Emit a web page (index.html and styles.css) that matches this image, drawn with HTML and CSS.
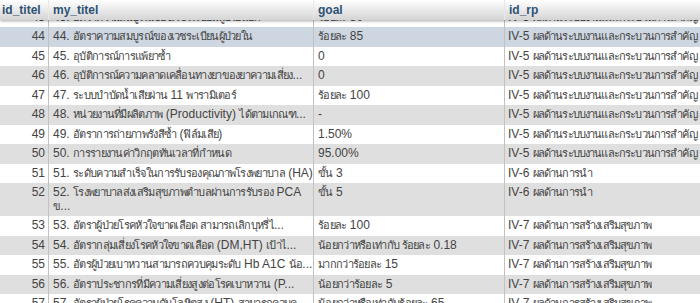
FILE: index.html
```html
<!DOCTYPE html>
<html>
<head>
<meta charset="utf-8">
<link rel="stylesheet" href="styles.css">
</head>
<body>
<div class="grid">
  <table class="tbl head">
    <colgroup><col class="c1"><col class="c2"><col class="c3"><col class="c4"></colgroup>
    <thead>
      <tr><th class="first">id_titel</th><th>my_titel</th><th>goal</th><th>id_rp</th></tr>
    </thead>
  </table>
  <table class="tbl data">
    <colgroup><col class="c1"><col class="c2"><col class="c3"><col class="c4"></colgroup>
    <tbody>
      <tr class="odd"><td class="num">43</td><td>43. <span class="th">อัตราความสมบูรณ์ของเวชระเบียนผู้ป่วยนอก</span></td><td><span class="th">ร้อยละ</span> 80</td><td class="rp">IV-5 <span class="th">ผลด้านระบบงานและกระบวนการสำคัญ</span></td></tr>
      <tr class="marked"><td class="num">44</td><td>44. <span class="th">อัตราความสมบูรณ์ของเวชระเบียนผู้ป่วยใน</span></td><td><span class="th">ร้อยละ</span> 85</td><td class="rp">IV-5 <span class="th">ผลด้านระบบงานและกระบวนการสำคัญ</span></td></tr>
      <tr class="odd"><td class="num">45</td><td>45. <span class="th">อุบัติการณ์การแพ้ยาซ้ำ</span></td><td>0</td><td class="rp">IV-5 <span class="th">ผลด้านระบบงานและกระบวนการสำคัญ</span></td></tr>
      <tr class="even"><td class="num">46</td><td>46. <span class="th">อุบัติการณ์ความคลาดเคลื่อนทางยาของยาความเสี่ยง</span>...</td><td>0</td><td class="rp">IV-5 <span class="th">ผลด้านระบบงานและกระบวนการสำคัญ</span></td></tr>
      <tr class="odd"><td class="num">47</td><td>47. <span class="th">ระบบบำบัดน้ำเสียผ่าน</span> 11 <span class="th">พารามิเตอร์</span></td><td><span class="th">ร้อยละ</span> 100</td><td class="rp">IV-5 <span class="th">ผลด้านระบบงานและกระบวนการสำคัญ</span></td></tr>
      <tr class="even"><td class="num">48</td><td>48. <span class="th">หน่วยงานที่มีผลิตภาพ</span> (Productivity) <span class="th">ได้ตามเกณฑ</span>...</td><td>-</td><td class="rp">IV-5 <span class="th">ผลด้านระบบงานและกระบวนการสำคัญ</span></td></tr>
      <tr class="odd"><td class="num">49</td><td>49. <span class="th">อัตราการถ่ายภาพรังสีซ้ำ</span> (<span class="th">ฟิล์มเสีย</span>)</td><td>1.50%</td><td class="rp">IV-5 <span class="th">ผลด้านระบบงานและกระบวนการสำคัญ</span></td></tr>
      <tr class="even"><td class="num">50</td><td>50. <span class="th">การรายงานค่าวิกฤตทันเวลาที่กำหนด</span></td><td>95.00%</td><td class="rp">IV-5 <span class="th">ผลด้านระบบงานและกระบวนการสำคัญ</span></td></tr>
      <tr class="odd"><td class="num">51</td><td>51. <span class="th">ระดับความสำเร็จในการรับรองคุณภาพโรงพยาบาล</span> (HA)</td><td><span class="th">ขั้น</span> 3</td><td class="rp">IV-6 <span class="th">ผลด้านการนำ</span></td></tr>
      <tr class="even"><td class="num">52</td><td>52. <span class="th">โรงพยาบาลส่งเสริมสุขภาพตำบลผ่านการรับรอง</span> PCA<br><span class="th">ข</span>...</td><td><span class="th">ขั้น</span> 5</td><td class="rp">IV-6 <span class="th">ผลด้านการนำ</span></td></tr>
      <tr class="odd"><td class="num">53</td><td>53. <span class="th">อัตราผู้ป่วยโรคหัวใจขาดเลือด สามารถเลิกบุหรี่ไ</span>...</td><td><span class="th">ร้อยละ</span> 100</td><td class="rp">IV-7 <span class="th">ผลด้านการสร้างเสริมสุขภาพ</span></td></tr>
      <tr class="even"><td class="num">54</td><td>54. <span class="th">อัตรากลุ่มเสี่ยงโรคหัวใจขาดเลือด</span> (DM,HT) <span class="th">เป้าไ</span>...</td><td><span class="th">น้อยกว่าหรือเท่ากับ ร้อยละ</span> 0.18</td><td class="rp">IV-7 <span class="th">ผลด้านการสร้างเสริมสุขภาพ</span></td></tr>
      <tr class="odd"><td class="num">55</td><td>55. <span class="th">อัตรผู้ป่วยเบาหวานสามารถควบคุมระดับ</span> Hb A1C <span class="th">น้อ</span>...</td><td><span class="th">มากกว่าร้อยละ</span> 15</td><td class="rp">IV-7 <span class="th">ผลด้านการสร้างเสริมสุขภาพ</span></td></tr>
      <tr class="even"><td class="num">56</td><td>56. <span class="th">อัตราประชากรที่มีความเสี่ยงสูงต่อโรคเบาหวาน</span> (P...</td><td><span class="th">น้อยกว่าร้อยละ</span> 5</td><td class="rp">IV-7 <span class="th">ผลด้านการสร้างเสริมสุขภาพ</span></td></tr>
      <tr class="odd"><td class="num">57</td><td>57. <span class="th">อัตราผู้ป่วยโรคความดันโลหิตสูง</span> (HT) <span class="th">สามารถควบค</span>...</td><td><span class="th">น้อยกว่าหรือเท่ากับร้อยละ</span> 65</td><td class="rp">IV-7 <span class="th">ผลด้านการสร้างเสริมสุขภาพ</span></td></tr>
    </tbody>
  </table>
</div>
</body>
</html>
```

FILE: styles.css
```css
html, body {
  margin: 0;
  padding: 0;
  background: #ffffff;
}
.grid {
  position: relative;
  width: 700px;
  height: 303px;
  overflow: hidden;
  font-family: "Liberation Sans", Arial, sans-serif;
  font-size: 12px;
  color: #444;
}
.tbl {
  width: 700px;
  table-layout: fixed;
  border-collapse: separate;
  border-spacing: 0;
}
.c1 { width: 48px; }
.c2 { width: 265px; }
.c3 { width: 191px; }
.c4 { width: 196px; }

.head {
  position: absolute;
  left: 0;
  top: 0;
  z-index: 2;
  box-shadow: 0 1px 3px rgba(0, 0, 0, 0.35);
}
.head th {
  height: 20px;
  box-sizing: border-box;
  padding: 0 4px;
  text-align: left;
  font-weight: bold;
  font-size: 12px;
  color: #2d5275;
  background: linear-gradient(#ffffff, #d4d4d4);
  border-left: 1px solid #e8e8e8;
  white-space: nowrap;
  overflow: hidden;
}
.head th.first {
  border-left: none;
  padding-left: 2px;
}
.data {
  margin-top: 7.5px;
}
.data td {
  padding: 3px 4px;
  line-height: 13.5px;
  vertical-align: top;
  white-space: nowrap;
  overflow: hidden;
  border-left: 1px solid #c2c2c2;
}
.data td.num {
  border-left: none;
  text-align: right;
  padding-right: 3px;
}
.th {
  font-size: 11px;
  letter-spacing: -0.7px;
}
.data td.rp {
  padding-left: 3px;
}
.rp .th {
  letter-spacing: -0.85px;
}
.odd td { background: #ffffff; }
.even td { background: #dfdfdf; }
.marked td { background: #ced7e1; }
```
